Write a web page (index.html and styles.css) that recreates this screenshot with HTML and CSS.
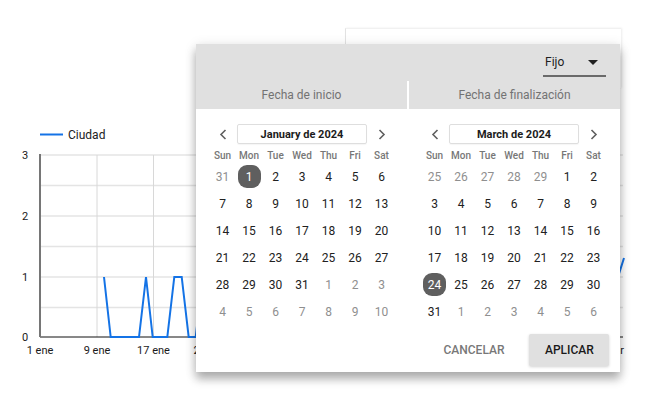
FILE: index.html
```html
<!DOCTYPE html>
<html lang="es">
<head>
<meta charset="utf-8">
<title>Selector de fechas</title>
<link rel="stylesheet" href="styles.css">
</head>
<body>
<div class="page">
  <svg class="chart" width="660" height="402" viewBox="0 0 660 402">
    <line x1="40" y1="134.5" x2="63" y2="134.5" stroke="#1473e6" stroke-width="2"/>
    <text x="68" y="138.7" class="legend-text">Ciudad</text>
    <g stroke="#e4e4e4" stroke-width="1.5">
      <line x1="40" y1="155" x2="623" y2="155"/>
      <line x1="40" y1="185.5" x2="623" y2="185.5"/>
      <line x1="40" y1="216" x2="623" y2="216"/>
      <line x1="40" y1="246.5" x2="623" y2="246.5"/>
      <line x1="40" y1="277" x2="623" y2="277"/>
      <line x1="40" y1="307.5" x2="623" y2="307.5"/>
    </g>
    <g stroke="#d8d8d8" stroke-width="1">
      <line x1="97" y1="155" x2="97" y2="337"/>
      <line x1="153.5" y1="155" x2="153.5" y2="337"/>
      <line x1="210" y1="155" x2="210" y2="337"/>
      <line x1="266.5" y1="155" x2="266.5" y2="337"/>
      <line x1="323" y1="155" x2="323" y2="337"/>
      <line x1="379.5" y1="155" x2="379.5" y2="337"/>
      <line x1="436" y1="155" x2="436" y2="337"/>
      <line x1="492.5" y1="155" x2="492.5" y2="337"/>
      <line x1="549" y1="155" x2="549" y2="337"/>
      <line x1="605.5" y1="155" x2="605.5" y2="337"/>
    </g>
    <line x1="40" y1="337" x2="623" y2="337" stroke="#111" stroke-width="1"/>
    <line x1="40" y1="154" x2="40" y2="337" stroke="#767676" stroke-width="2"/>
    <g class="axis-text" text-anchor="middle">
      <text x="25" y="159">3</text>
      <text x="25" y="220">2</text>
      <text x="25" y="281">1</text>
      <text x="25" y="341">0</text>
      <text x="40" y="354">1 ene</text>
      <text x="97" y="354">9 ene</text>
      <text x="153.5" y="354">17 ene</text>
      <text x="210" y="354">25 ene</text>
    </g>
    <text x="624" y="354" class="axis-text" text-anchor="end">1 mar</text>
    <polyline fill="none" stroke="#1473e6" stroke-width="2" stroke-linejoin="miter"
      points="104,277 110.7,337 139,337 146,277 152.7,337 167.3,337 174.3,277 181.7,277 188.7,337 195.7,337 202.7,277 209.8,337"/>
    <polyline fill="none" stroke="#1473e6" stroke-width="2" points="612,337 618,277 624,258"/>
  </svg>

  <div class="backcard"></div>

  <div class="picker">
    <div class="picker-head">
      <div class="mode-row">
        <div class="select">
          <span class="select-value">Fijo</span>
          <svg class="select-arrow" width="10" height="5" viewBox="0 0 10 5"><path d="M0 0 L10 0 L5 5 Z" fill="#212121"/></svg>
        </div>
      </div>
      <div class="tabs">
        <div class="tab">Fecha de inicio</div>
        <div class="tab">Fecha de finalización</div>
      </div>
    </div>

    <div class="months">
      <div class="month">
        <div class="nav">
          <span class="chev"><svg width="8" height="11" viewBox="0 0 8 11"><polyline points="6.5,1 2,5.5 6.5,10" fill="none" stroke="#5f5f5f" stroke-width="1.6"/></svg></span>
          <div class="title">January de 2024</div>
          <span class="chev"><svg width="8" height="11" viewBox="0 0 8 11"><polyline points="1.5,1 6,5.5 1.5,10" fill="none" stroke="#5f5f5f" stroke-width="1.6"/></svg></span>
        </div>
        <div class="dow"><span>Sun</span><span>Mon</span><span>Tue</span><span>Wed</span><span>Thu</span><span>Fri</span><span>Sat</span></div>
        <div class="days">
          <span class="out">31</span><span class="sel">1</span><span>2</span><span>3</span><span>4</span><span>5</span><span>6</span>
          <span>7</span><span>8</span><span>9</span><span>10</span><span>11</span><span>12</span><span>13</span>
          <span>14</span><span>15</span><span>16</span><span>17</span><span>18</span><span>19</span><span>20</span>
          <span>21</span><span>22</span><span>23</span><span>24</span><span>25</span><span>26</span><span>27</span>
          <span>28</span><span>29</span><span>30</span><span>31</span><span class="out">1</span><span class="out">2</span><span class="out">3</span>
          <span class="out">4</span><span class="out">5</span><span class="out">6</span><span class="out">7</span><span class="out">8</span><span class="out">9</span><span class="out">10</span>
        </div>
      </div>
      <div class="month">
        <div class="nav">
          <span class="chev"><svg width="8" height="11" viewBox="0 0 8 11"><polyline points="6.5,1 2,5.5 6.5,10" fill="none" stroke="#5f5f5f" stroke-width="1.6"/></svg></span>
          <div class="title">March de 2024</div>
          <span class="chev"><svg width="8" height="11" viewBox="0 0 8 11"><polyline points="1.5,1 6,5.5 1.5,10" fill="none" stroke="#5f5f5f" stroke-width="1.6"/></svg></span>
        </div>
        <div class="dow"><span>Sun</span><span>Mon</span><span>Tue</span><span>Wed</span><span>Thu</span><span>Fri</span><span>Sat</span></div>
        <div class="days">
          <span class="out">25</span><span class="out">26</span><span class="out">27</span><span class="out">28</span><span class="out">29</span><span>1</span><span>2</span>
          <span>3</span><span>4</span><span>5</span><span>6</span><span>7</span><span>8</span><span>9</span>
          <span>10</span><span>11</span><span>12</span><span>13</span><span>14</span><span>15</span><span>16</span>
          <span>17</span><span>18</span><span>19</span><span>20</span><span>21</span><span>22</span><span>23</span>
          <span class="sel">24</span><span>25</span><span>26</span><span>27</span><span>28</span><span>29</span><span>30</span>
          <span>31</span><span class="out">1</span><span class="out">2</span><span class="out">3</span><span class="out">4</span><span class="out">5</span><span class="out">6</span>
        </div>
      </div>
    </div>

    <div class="actions">
      <button class="btn btn-cancel">CANCELAR</button>
      <button class="btn btn-apply">APLICAR</button>
    </div>
  </div>
</div>
</body>
</html>
```

FILE: styles.css
```css
* { box-sizing: border-box; }
html, body { margin: 0; padding: 0; background: #fff; }
body { font-family: Roboto, "Liberation Sans", Arial, sans-serif; color: #212121; }

.page {
  position: relative;
  width: 660px;
  height: 402px;
  overflow: hidden;
  background: #fff;
}

.chart { display: block; }
.legend-text { font-family: Roboto, "Liberation Sans", sans-serif; font-size: 12px; fill: #212121; }
.axis-text { font-family: Roboto, "Liberation Sans", sans-serif; font-size: 11px; fill: #1a1a1a; }

.backcard {
  position: absolute;
  left: 345px;
  top: 28px;
  width: 276px;
  height: 60px;
  background: #fff;
  border-left: 1px solid #e2e2e2;
  border-top: 1px solid #f1f1f1;
  box-shadow: 1px 0 2px rgba(0,0,0,0.08);
}

.picker {
  position: absolute;
  left: 196px;
  top: 44px;
  width: 424px;
  height: 328px;
  background: #fff;
  display: flex;
  flex-direction: column;
  box-shadow: 0 7px 9px rgba(0,0,0,0.28), 0 2px 12px rgba(0,0,0,0.12);
}

.picker-head { background: #e0e0e0; }

.mode-row {
  height: 37px;
  display: flex;
  justify-content: flex-end;
  align-items: flex-end;
  padding: 0 14px 4px 0;
}

.select {
  width: 63px;
  height: 28px;
  display: flex;
  align-items: center;
  justify-content: space-between;
  padding: 0 8px 0 2px;
  border-bottom: 2px solid #6a6a6a;
}
.select-value { font-size: 12px; color: #212121; }
.select-arrow { display: block; }

.tabs {
  display: flex;
  gap: 2px;
  background: #fff;
  height: 28px;
}
.tab {
  flex: 1;
  background: #e0e0e0;
  display: flex;
  align-items: center;
  justify-content: center;
  font-size: 12px;
  color: #737373;
}

.months { display: flex; }
.month {
  width: 212px;
  padding-top: 15px;
}

.nav, .dow, .days {
  display: grid;
  grid-template-columns: repeat(7, 26.5px);
  justify-content: center;
}

.nav { height: 20px; align-items: center; }
.chev { display: flex; align-items: center; justify-content: center; }
.chev svg { display: block; }
.title {
  grid-column: 2 / 7;
  height: 20px;
  margin: 0 1px;
  border: 1px solid #dedede;
  border-radius: 2px;
  display: flex;
  align-items: center;
  justify-content: center;
  font-size: 11px;
  font-weight: 700;
  color: #1c1c1c;
  box-shadow: 0 1px 1px rgba(0,0,0,0.04);
}

.dow { margin-top: 4px; height: 15px; align-items: center; }
.dow span {
  text-align: center;
  font-size: 10px;
  font-weight: 500;
  color: #777;
}

.days { grid-auto-rows: 27px; }
.days span {
  display: flex;
  align-items: center;
  justify-content: center;
  font-size: 12px;
  color: #212121;
}
.days span.out { color: #8f8f8f; }
.days span.sel {
  width: 23px;
  height: 23px;
  margin: 2px auto;
  border-radius: 9px;
  background: #5f5f5f;
  color: #fff;
}

.actions {
  display: flex;
  justify-content: flex-end;
  align-items: center;
  gap: 8px;
  padding: 9px 11px 6px 0;
}
.btn {
  font-family: Roboto, "Liberation Sans", sans-serif;
  font-size: 12px;
  font-weight: 500;
  border: 0;
  height: 32px;
  padding: 0 16px;
  background: transparent;
  border-radius: 2px;
}
.btn-cancel { color: #787878; width: 94px; }
.btn-apply {
  width: 80px;
  background: #e0e0e0;
  color: #1a1a1a;
  box-shadow: 0 1px 3px rgba(0,0,0,0.18);
}
```
